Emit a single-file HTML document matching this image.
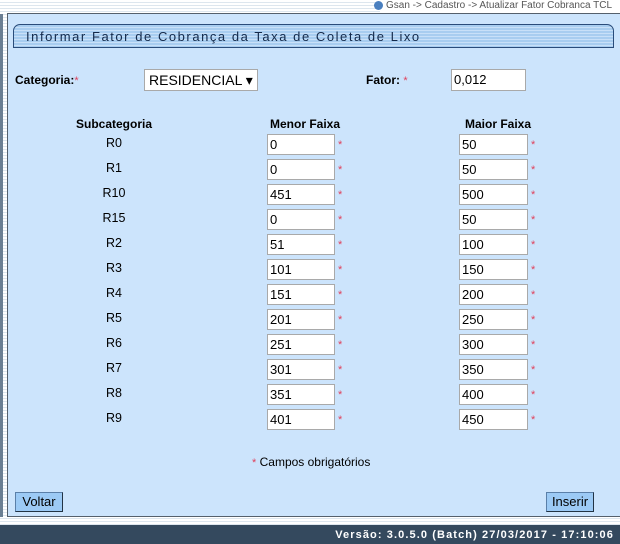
<!DOCTYPE html><html><head><style>
body{margin:0;width:620px;height:544px;background:#fff;font-family:"Liberation Sans",Arial,sans-serif;font-size:12px;color:#000;position:relative;overflow:hidden}
.a{position:absolute}
.stripes{background:repeating-linear-gradient(#fff 0 2px,#dde6ee 2px 3px)}
.inp{position:absolute;height:19px;background:#fff;border:1px solid #a9a9a9;box-sizing:border-box;font-size:13px;line-height:17px;padding-left:2px}
.st{position:absolute;color:#e0405a;font-size:11px}
.lbl{position:absolute;width:60px;text-align:center;font-size:12.5px}
.btn{position:absolute;background:#9ccaf5;border:1px solid #5a7fa8;border-right-color:#234;border-bottom-color:#234;box-sizing:border-box;height:20px;line-height:18px;font-size:13px;text-align:center}
</style></head><body>
<div class="a stripes" style="left:0;top:0;width:620px;height:525px"></div>
<div class="a" style="left:0;top:14px;width:3px;height:503px;background:#6b7f93"></div>
<div class="a" style="left:380px;top:0;width:240px;height:12px;background:#fff"></div>
<div class="a" style="left:374px;top:1px;width:9px;height:9px;border-radius:50%;background:#4a7fbf"></div>
<div class="a" style="left:386px;top:0;font-size:10px;color:#555;line-height:11px;white-space:nowrap">Gsan -&gt; Cadastro -&gt; Atualizar Fator Cobranca TCL</div>
<div class="a" style="left:7px;top:13px;width:613px;height:504px;background:#cce4fc;border:1px solid #55606c;border-right:none;box-sizing:border-box"></div>
<div class="a" style="left:13px;top:24px;width:601px;height:24px;border:1px solid #2a4c7a;border-radius:7px 7px 0 0;box-sizing:border-box;background:repeating-linear-gradient(#a8cdf0 0 2px,#c8e0f8 2px 3px)"></div>
<div class="a" style="left:26px;top:29px;font-size:13px;letter-spacing:1.55px;color:#13294a">Informar Fator de Cobrança da Taxa de Coleta de Lixo</div>
<div class="a" style="left:15px;top:73px;font-weight:bold">Categoria:<span style="color:#e0405a;font-weight:normal;font-size:11px">*</span></div>
<div class="a" style="left:144px;top:69px;width:114px;height:22px;background:#fff;border:1px solid #a9a9a9;box-sizing:border-box;font-size:14px;line-height:20px;padding-left:4px">RESIDENCIAL ▾</div>
<div class="a" style="left:366px;top:73px;font-weight:bold">Fator: <span style="color:#e0405a;font-weight:normal;font-size:11px">*</span></div>
<div class="inp" style="left:451px;top:69px;width:75px;height:22px;font-size:13px;line-height:20px">0,012</div>
<div class="a" style="left:76px;top:117px;font-weight:bold">Subcategoria</div>
<div class="a" style="left:270px;top:117px;font-weight:bold">Menor Faixa</div>
<div class="a" style="left:465px;top:117px;font-weight:bold">Maior Faixa</div>
<div id="rows"></div>
<div class="a" style="left:252px;top:455px"><span style="color:#e0405a;font-size:11px">*</span> Campos obrigatórios</div>
<div class="btn" style="left:15px;top:492px;width:48px">Voltar</div>
<div class="btn" style="left:546px;top:492px;width:48px">Inserir</div>
<div class="a" style="left:0;top:525px;width:620px;height:19px;background:#34495e"></div>
<div class="a" style="right:6px;top:529px;color:#fff;font-weight:bold;font-size:11px;letter-spacing:1.1px">Versão: 3.0.5.0 (Batch) 27/03/2017 - 17:10:06</div>
<script>
var d=[["R0",0,50],["R1",0,50],["R10",451,500],["R15",0,50],["R2",51,100],["R3",101,150],["R4",151,200],["R5",201,250],["R6",251,300],["R7",301,350],["R8",351,400],["R9",401,450]],h="";
d.forEach(function(r,i){var y=134+i*25;
h+='<div class="lbl" style="left:84px;top:'+(y+2)+'px">'+r[0]+'</div>';
h+='<div class="inp" style="left:267px;top:'+y+'px;width:68px;height:21px;line-height:19px">'+r[1]+'</div><div class="st" style="left:338px;top:'+(y+5)+'px">*</div>';
h+='<div class="inp" style="left:459px;top:'+y+'px;width:69px;height:21px;line-height:19px">'+r[2]+'</div><div class="st" style="left:531px;top:'+(y+5)+'px">*</div>';});
document.getElementById("rows").innerHTML=h;
</script>
</body></html>
